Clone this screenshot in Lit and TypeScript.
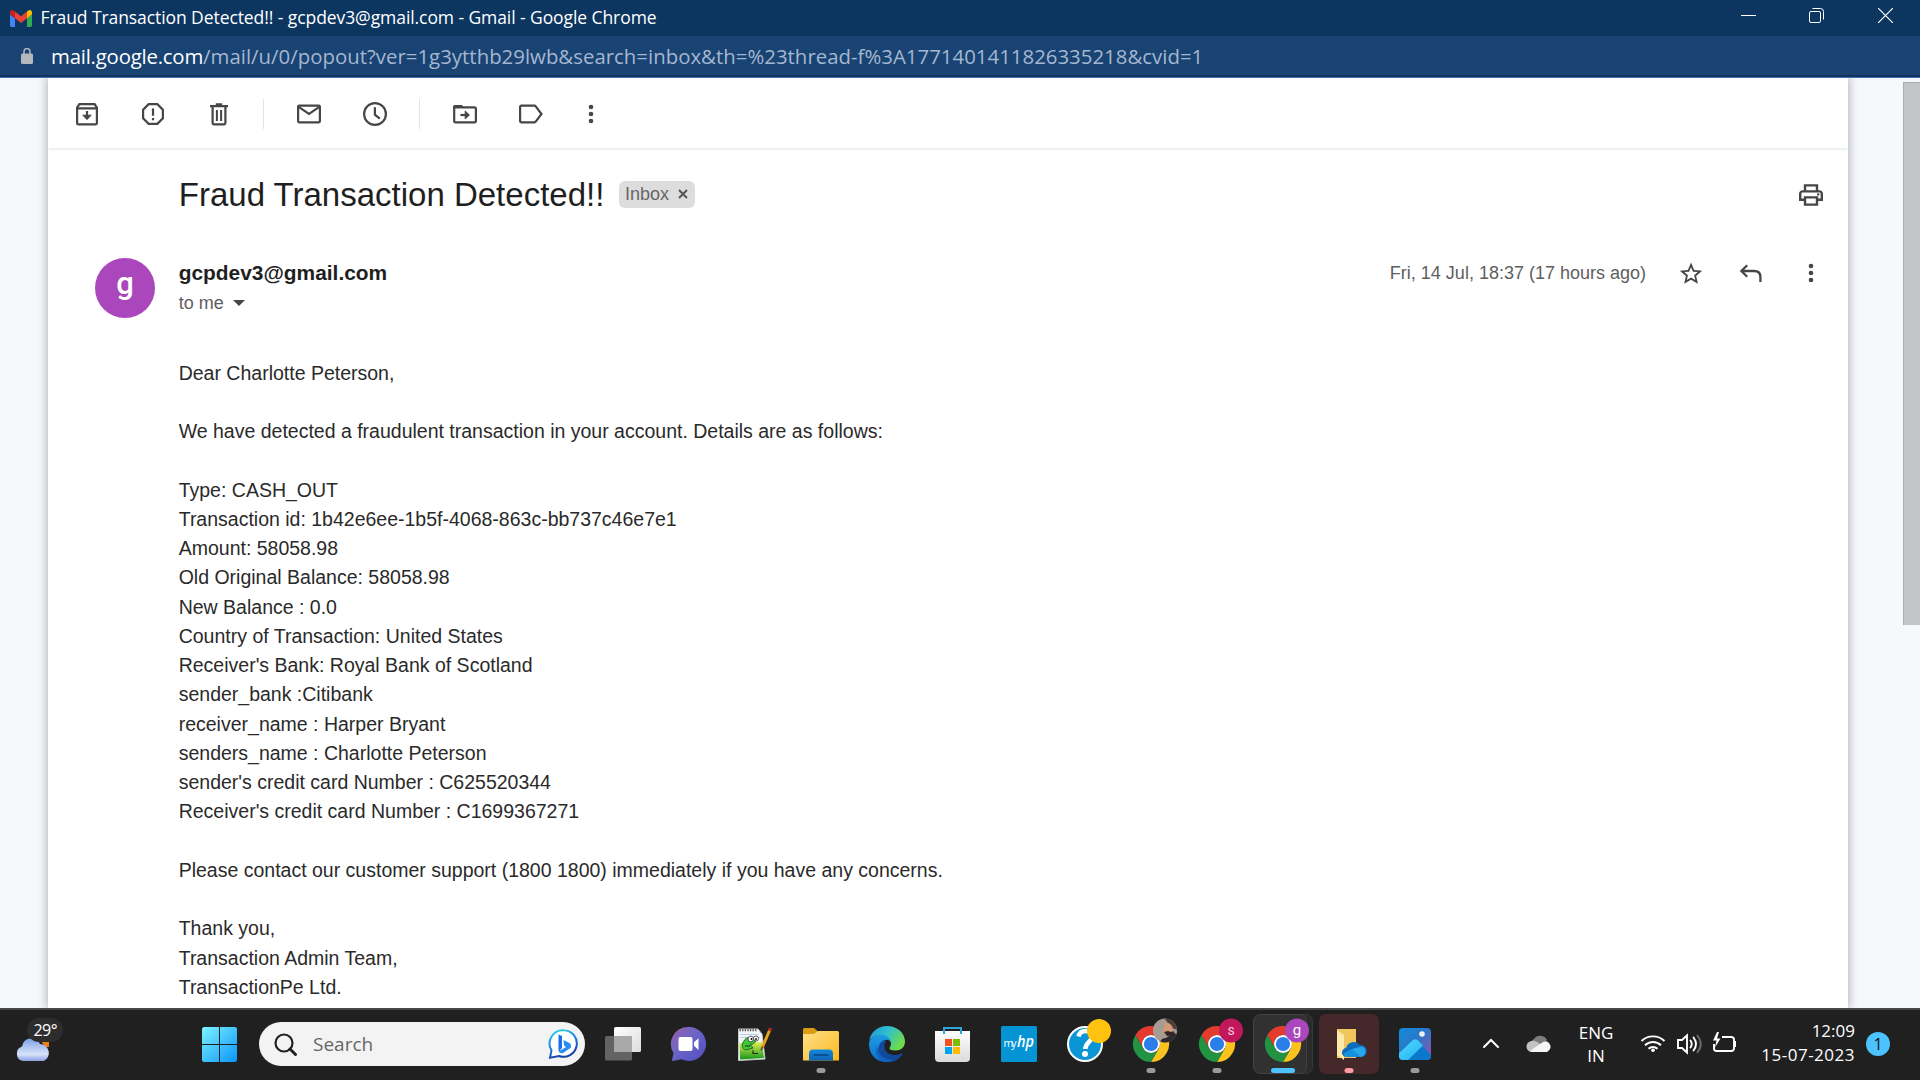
import { LitElement, html, css, svg } from "lit";
import { customElement } from "lit/decorators.js";

const bodyLines = [
  "Dear Charlotte Peterson,",
  "",
  "We have detected a fraudulent transaction in your account. Details are as follows:",
  "",
  "Type: CASH_OUT",
  "Transaction id: 1b42e6ee-1b5f-4068-863c-bb737c46e7e1",
  "Amount: 58058.98",
  "Old Original Balance: 58058.98",
  "New Balance : 0.0",
  "Country of Transaction: United States",
  "Receiver's Bank: Royal Bank of Scotland",
  "sender_bank :Citibank",
  "receiver_name : Harper Bryant",
  "senders_name : Charlotte Peterson",
  "sender's credit card Number : C625520344",
  "Receiver's credit card Number : C1699367271",
  "",
  "Please contact our customer support (1800 1800) immediately if you have any concerns.",
  "",
  "Thank you,",
  "Transaction Admin Team,",
  "TransactionPe Ltd.",
];

const icon30 = (content: unknown) => html`<svg class="icon" width="30" height="30" viewBox="0 0 30 30" fill="none" stroke="#444746" stroke-width="2.2">${content}</svg>`;

const dots = svg`<g fill="#444746" stroke="none"><circle cx="15" cy="8" r="2.3"/><circle cx="15" cy="15" r="2.3"/><circle cx="15" cy="22" r="2.3"/></g>`;

const archive = svg`<path d="M5.1 8.6V24a1.4 1.4 0 0 0 1.4 1.4h17a1.4 1.4 0 0 0 1.4-1.4V8.6L22.6 5.1H7.4Z"/><path d="M5.1 9.4h19.8M15 12v8"/><path d="M10.800 16.200L15 20.600l4.200-4.400Z" fill="#444746" stroke-width="1"/>`;
const spam = svg`<path d="M10.600 5.100h8.800l5.500 5.500v8.800l-5.500 5.500h-8.800l-5.500-5.500v-8.800Z"/><path d="M15 9.400v7.400M15 18.900v2.400"/>`;
const trash = svg`<path d="M6 7.100h18M11.800 5.400h6.400M8.600 7.500v16.600a1.300 1.300 0 0 0 1.300 1.300h10.200a1.300 1.300 0 0 0 1.300-1.300V7.500"/><path d="M12.900 11v11M17.100 11v11" stroke-width="2"/>`;
const mail = svg`<rect x="4.100" y="6.700" width="21.800" height="16.600" rx="1"/><path d="M4.300 7.600l10.700 7.200L25.700 7.600"/>`;
const clock = svg`<circle cx="15" cy="15" r="10.900"/><path d="M14.900 8.300v7.400l4.900 4"/>`;
const moveTo = svg`<path d="M3.100 7.400a1.500 1.500 0 0 1 1.500-1.500h7.200l2.600 2.800H3.100Z" fill="#444746" stroke="none"/><path d="M4.200 8.400h20.400a1.300 1.300 0 0 1 1.300 1.300v12.400a1.300 1.300 0 0 1-1.300 1.300H5.400a1.200 1.200 0 0 1-1.200-1.300V7"/><path d="M10.400 16h8"/><path d="M15.200 12l4.200 4-4.200 4Z" fill="#444746" stroke-width="1"/>`;
const label = svg`<path d="M4.100 7.900a1.200 1.200 0 0 1 1.200-1.200h13.200a1.500 1.500 0 0 1 1.200.6l5.800 7.700-5.800 7.700a1.500 1.500 0 0 1-1.200.6H5.300a1.200 1.200 0 0 1-1.200-1.200Z"/>`;
const printer = svg`<g transform="translate(.6 .6) scale(1.2)" fill="#444746" stroke="none"><path d="M19 8h-1V3H6v5H5c-1.660 0-3 1.340-3 3v6h4v4h12v-4h4v-6c0-1.660-1.340-3-3-3zM8 5h8v3H8V5zm8 12v2H8v-4h8v2zm2-2v-2H6v2H4v-4c0-.55.45-1 1-1h14c.55 0 1 .45 1 1v4h-2z"/><circle cx="18" cy="11.500" r="1"/></g>`;
const star = svg`<path transform="translate(1.600 2.300) scale(1.120)" fill="#444746" stroke="none" d="M22 9.240l-7.190-.62L12 2 9.190 8.630 2 9.240l5.460 4.730L5.820 21 12 17.270 18.180 21l-1.630-7.030L22 9.240zM12 15.400l-3.760 2.270 1-4.280-3.320-2.880 4.380-.38L12 6.100l1.710 4.040 4.380.38-3.320 2.880 1 4.280L12 15.400z"/>`;
const reply = svg`<path d="M11.200 7.200L5.400 13l5.800 5.800M5.600 13h12.600c4.200 0 6.200 2.400 6.200 6v5" stroke-width="2.300"/>`;

const chromeLogo = svg`<g transform="translate(33 36)">
  <path fill="#e33b2e" d="M-15.590-9A18 18 0 0 1 15.590-9L0-9A9 9 0 0 0-7.790 4.500Z"/>
  <path fill="#fcc31e" transform="rotate(120)" d="M-15.590-9A18 18 0 0 1 15.590-9L0-9A9 9 0 0 0-7.790 4.500Z"/>
  <path fill="#229342" transform="rotate(240)" d="M-15.590-9A18 18 0 0 1 15.590-9L0-9A9 9 0 0 0-7.790 4.500Z"/>
  <circle r="9" fill="#fff"/><circle r="7.100" fill="#2b7de9"/></g>`;
const runDot = svg`<rect x="28.500" y="60" width="9" height="5" rx="2.500" fill="#9a9a9a"/>`;

const taskView = svg`<defs><linearGradient id="tv" x1="0" y1="0" x2="1" y2="1"><stop stop-color="#fff"/><stop offset="1" stop-color="#dcdcdc"/></linearGradient></defs>
  <rect x="24" y="19" width="27" height="25" rx="1.500" fill="url(#tv)"/><rect x="15" y="28" width="27" height="24.500" rx="1.500" fill="#636363"/><path d="M24 28h18v16H24Z" fill="#a9a9a9"/>`;
const chat = svg`<defs><linearGradient id="ch" x1="0" y1="0" x2="1" y2="1"><stop stop-color="#9a5fa8"/><stop offset=".4" stop-color="#6f66c4"/><stop offset="1" stop-color="#4f4fc4"/></linearGradient></defs>
  <path d="M32.500 19a17 17 0 1 1-7 32.200L16.500 53l-.500-1 1.500-7A17 17 0 0 1 32.500 19Z" fill="url(#ch)"/>
  <rect x="22.500" y="29" width="14" height="14" rx="2" fill="#fff"/><path d="M38 34.300l4.500-4.100v11.800L38 37.800Z" fill="#fff"/>`;
const notepad = svg`<defs><linearGradient id="np" x1="0" y1="0" x2="0" y2="1"><stop stop-color="#e7ee54"/><stop offset="1" stop-color="#12971a"/></linearGradient></defs>
  <path d="M16.500 21h19.500l4 5 3 25-26.500 1.500Z" fill="#f3f6f8" stroke="#c5c8c8"/>
  <path d="M17.500 22.200h18" stroke="#444" stroke-width="2" stroke-dasharray="1.300 1.300"/><path d="M18 26.500h18M18 29.500h20" stroke="#b9cfe6"/>
  <path d="M17.500 35l22.500-1 2 16-24 1.500Z" fill="url(#np)"/>
  <path d="M22 33c2-4 6-4 7-1l4-1c2 3-2 6-5 5l3 4-7 2c-4-1-5-5-2-9Z" fill="#3ec93a" stroke="#236b1b"/>
  <circle cx="28.800" cy="31" r="2.800" fill="#fff" stroke="#333" stroke-width=".8"/><circle cx="34" cy="30.500" r="2.500" fill="#fff" stroke="#333" stroke-width=".8"/><circle cx="29.500" cy="31" r="1"/><circle cx="34" cy="31" r=".9"/>
  <path d="M31 42.500v3h5M23 38h5" stroke="#1e2b12" stroke-width="1.200" fill="none"/>
  <path d="M48 21.500L40 40" stroke="#e9a41b" stroke-width="3"/><path d="M48.700 20l-1.200 3" stroke="#b32b25" stroke-width="3"/><path d="M40.700 38.500L39 42.500" stroke="#5a4224" stroke-width="1.500"/>`;
const explorer = svg`<defs><linearGradient id="ex" x1="0" y1="0" x2="1" y2="1"><stop stop-color="#ffe08a"/><stop offset="1" stop-color="#f9b91e"/></linearGradient><linearGradient id="eb" x1="0" y1="0" x2="0" y2="1"><stop stop-color="#1489dd"/><stop offset="1" stop-color="#0e64b4"/></linearGradient></defs>
  <path d="M15 21.500a1.500 1.500 0 0 1 1.500-1.500h9.500l4 3.500-3.500 3H15Z" fill="#dd9d10"/>
  <path d="M15 26h11l4-3h19.500a1.500 1.500 0 0 1 1.500 1.500v28H15Z" fill="url(#ex)"/>
  <path d="M21 52.500v-7a4 4 0 0 1 4-4h16a4 4 0 0 1 4 4v7Z" fill="url(#eb)"/><path d="M25.500 47h15" stroke="#0a4c8c" stroke-width="1.800"/>${runDot}`;
const edge = svg`<defs><linearGradient id="e1" x1="0" y1="0" x2="1" y2=".5"><stop stop-color="#2492d8"/><stop offset=".5" stop-color="#2fc0cf"/><stop offset="1" stop-color="#6edb4b"/></linearGradient><linearGradient id="e2" x1="0" y1="0" x2="0" y2="1"><stop stop-color="#1f9de2"/><stop offset="1" stop-color="#0c6fd0"/></linearGradient></defs>
  <path d="M15.300 32C17 24 24 18 33 18c10 0 18 7 18 15.500 0 6-4.500 9-9.500 9-4 0-6-1-6-2.300 0-1 1.500-1.800 1.500-4.600 0-4-5-8.500-11-8.500-4.500 0-8.500 2-10.700 4.900Z" fill="url(#e1)"/>
  <path d="M15 36c0-5.500 5-9.500 11.500-9.500 5.500 0 9.500 3 10.300 7.500-1.500-1.800-3.500-2.500-5.300-2-7 2-9 11-1 18.500l5.500 3C23 56 15 47 15 36Z" fill="url(#e2)"/>
  <path d="M28 33.500c-4.500 4-5.500 11 .5 16.500 6.500 6 14.500 4.500 19.700-3.500.5-.8-.2-1.500-1.200-1-8.500 4-17.500-.5-16.500-8 .2-2 .8-3.500 1.700-4.700-1.600-.5-3-.4-4.200.7Z" fill="#114a9d"/>
  <path d="M32 53.900c-8-1.500-12-9-9-16 1 9 8 14 16 14-2 1.500-4.500 2.200-7 2Z" fill="#1263bf"/>`;
const store = svg`<defs><linearGradient id="st" x1="0" y1="0" x2="0" y2="1"><stop stop-color="#fff"/><stop offset="1" stop-color="#dadada"/></linearGradient></defs>
  <path d="M15 23h35v27a4 4 0 0 1-4 4H19a4 4 0 0 1-4-4Z" fill="url(#st)"/><path d="M24 26v-6h17v6" fill="none" stroke="#2ba7dd" stroke-width="2"/>
  <path d="M25 31h7v7h-7Z" fill="#f25022"/><path d="M33 31h7v7h-7Z" fill="#7fba00"/><path d="M25 39h7v7h-7Z" fill="#00a4ef"/><path d="M33 39h7v7h-7Z" fill="#ffb900"/>`;
const myhp = svg`<rect x="15" y="18" width="36" height="36" rx="1.500" fill="#0494d4"/><text x="17.500" y="39" fill="#fff" font-family="Open Sans, sans-serif"><tspan font-size="10.500" textLength="13">my</tspan><tspan x="31" font-size="16.500" font-weight="600" font-style="italic" textLength="17" lengthAdjust="spacingAndGlyphs">hp</tspan></text>`;
const help = svg`<circle cx="33" cy="36" r="17" fill="#0a95d5" stroke="#fff" stroke-width="2"/><path d="M26.500 28.500c1-4.500 4-5.500 7-5.500 4 0 6.500 2.500 6.500 5.500 0 5.500-6.500 5.500-6.700 12.500" fill="none" stroke="#fff" stroke-width="4.500"/><circle cx="33" cy="46" r="3" fill="#fff"/><circle cx="47" cy="23" r="12" fill="#ffc20e"/>`;
const chromePhoto = svg`<defs><clipPath id="av"><circle cx="47" cy="22.500" r="12"/></clipPath></defs>${chromeLogo}<g clip-path="url(#av)"><rect x="34" y="9" width="26" height="28" fill="#a69c94"/><path d="M46 10l14 2v10l-6-2-4-5Z" fill="#4b3f3c"/><path d="M47 15c5-1 8 3 8 8l-4 6-6-5Z" fill="#d49a78"/><path d="M42 37c0-6 3-7 6-7l8-6 4 5v9Z" fill="#2c2a2c"/><path d="M46 24l3 4 5-1 2-4-3 1-3-1Z" fill="#332522"/></g>${runDot}`;
const chromeS = svg`${chromeLogo}<circle cx="47" cy="22.500" r="12" fill="#c2185b"/><text x="47" y="27" text-anchor="middle" font-size="14" fill="#f6c6d9" font-family="Roboto, sans-serif">s</text>${runDot}`;
const chromeG = svg`<path d="M50 6.500h5q7.500 0 7.500 7.500v44q0 7.500-7.500 7.500h-5Z" fill="#2b2b2b" stroke="#383838"/><rect x="3.500" y="6.500" width="53" height="59" rx="7" fill="#313131" stroke="#434343"/>${chromeLogo}<circle cx="47" cy="22.500" r="12" fill="#ab47bc"/><text x="47" y="26.500" text-anchor="middle" font-size="15" fill="#fff" font-family="Roboto, sans-serif">g</text><rect x="21" y="60" width="24" height="5" rx="2.500" fill="#4cc2ff"/>`;
const oneDriveFolder = svg`<rect x="3" y="6" width="60" height="60" rx="7" fill="#452829"/><path d="M21 21h19v29H21Z" fill="#f0c75e"/><path d="M21 22l7 5v25l-7-5Z" fill="#fde9a9"/>
  <path d="M31 49a4.500 4.500 0 0 1-1-9 8 8 0 0 1 14-3 6 6 0 0 1 1.500 12Z" fill="#0f6cbd"/><path d="M28 45.500L36 41l10-2.500a5.500 5.500 0 0 1-1 10.500H31.500Q28 48 28 45.500Z" fill="#28a8ea"/><path d="M36 41l9 8H31.500Q29 48 28.500 45.500Z" fill="#1590df"/><rect x="28.500" y="60" width="9" height="5" rx="2.500" fill="#ff99a4"/>`;
const photos = svg`<defs><linearGradient id="ph" x1="0" y1="0" x2="1" y2="1"><stop stop-color="#128bdc"/><stop offset=".45" stop-color="#2b78c8"/><stop offset="1" stop-color="#9a4fb4"/></linearGradient><linearGradient id="pm" x1="0" y1="0" x2="1" y2="1"><stop stop-color="#55dcff"/><stop offset="1" stop-color="#1fb0f0"/></linearGradient><clipPath id="pc"><rect x="17" y="20" width="32" height="32" rx="4"/></clipPath></defs>
  <g clip-path="url(#pc)"><rect x="17" y="20" width="32" height="32" fill="url(#ph)"/><path d="M24 53l13.500-14a3 3 0 0 1 4 0L50 48v5Z" fill="#0b78cc"/><path d="M15 47l15.500-14.500a4 4 0 0 1 5.500 0l5 5L25 53H15Z" fill="url(#pm)"/></g><circle cx="40" cy="26" r="2.800" fill="#eee"/>${runDot}`;

const apps = [taskView, chat, notepad, explorer, edge, store, myhp, help, chromePhoto, chromeS, chromeG, oneDriveFolder, photos];

@customElement("app-root")
export class AppRoot extends LitElement {
  static styles = css`
    :host { display: block; width: 1920px; height: 1080px; overflow: hidden; font-family: "Liberation Sans", Arial, sans-serif; }
    * { box-sizing: border-box; }
    svg { display: block; flex: none; }
    .screen { display: flex; flex-direction: column; width: 1920px; height: 1080px; }
    .segoe { font-family: "Open Sans", "Noto Sans", sans-serif; }
    .titlebar { height: 36px; background: #0c3560; display: flex; align-items: center; padding-left: 10px; color: #fff; flex: none; }
    .title { font-size: 17.500px; letter-spacing: -0.08px; margin-left: 8.500px; flex: 1; white-space: nowrap; line-height: 24px; padding-bottom: 2px; }
    .controls { display: flex; align-items: center; padding: 0 27px 5px 0; gap: 54px; }
    .minimize { margin-right: -1px; }
    .address { height: 42px; background: #184373; border-bottom: 1px solid #3c72b0; box-shadow: inset 0 -2px #12335b; display: flex; align-items: center; padding: 0 0 2px 21px; font-size: 20.350px; color: #a5b7d0; white-space: nowrap; flex: none; }
    .url { margin-left: 18px; line-height: 30px; }
    .host { color: #fff; letter-spacing: -0.200px; }
    .path { letter-spacing: 0.030px; }
    .page { height: 930px; background: #f6f8fc; display: flex; overflow: hidden; flex: none; }
    .card { margin-left: 48px; width: 1800px; background: #fff; box-shadow: 0 0 9px 1px rgba(60, 64, 67, 0.38); flex: none; display: flex; flex-direction: column; }
    .scroll { margin-left: 55px; margin-top: 4px; width: 17px; height: 543px; background: #c4c5c9; border-left: 1px solid #adadb0; border-top: 1px solid #adadb0; }
    .toolbar { height: 72px; border-bottom: 2px solid #eff0f0; display: flex; align-items: center; padding: 2px 0 0 23px; gap: 36px; margin: 0 1px; flex: none; }
    .sep { width: 1px; height: 30px; background: #e3e5e8; margin: 0 -6px 0 -7px; }
    .overflow { margin-left: -6px; }
    .subject-row { display: flex; align-items: center; height: 89px; padding: 0 22px 0 130.800px; }
    .subject { font-size: 33px; color: #1f1f1f; font-weight: 400; margin: 0; white-space: nowrap; line-height: 44px; }
    .badge { margin-left: 14.600px; width: 76px; height: 27px; border-radius: 6px; background: #ddd; color: #666; font-size: 18px; display: flex; align-items: center; padding-left: 6px; gap: 9px; white-space: nowrap; }
    .badge svg { margin-top: -2px; }
    .grow { flex: 1; }
    .head { display: flex; align-items: flex-start; height: 119.600px; padding: 19px 22px 0 47px; }
    .avatar { width: 60px; height: 60px; border-radius: 50%; background: #ab47bc; color: #fff; font: 500 31px/51px Roboto, sans-serif; text-align: center; }
    .who { margin-left: 23.700px; }
    .sender { font-size: 20.900px; font-weight: 700; color: #1f1f1f; line-height: 30px; white-space: nowrap; }
    .to { font-size: 18px; color: #5e5e5e; line-height: 28px; display: flex; align-items: center; gap: 9px; padding-top: 1px; }
    .date { font-size: 18px; color: #5e5e5e; line-height: 30px; white-space: nowrap; margin-right: 30px; }
    .actions { display: flex; gap: 30px; }
    .body { padding-left: 130.700px; font-size: 19.500px; line-height: 29.250px; color: #2a2a2a; white-space: pre; }
    .line { height: 29.250px; }
    .taskbar { height: 72px; background: #202020; border-top: 2px solid #484848; display: flex; color: #fff; flex: none; }
    .taskbar > * { flex: none; }
    .search { width: 326px; height: 44px; border-radius: 22px; background: #f3f3f3; margin-top: 12px; margin-right: 5px; display: flex; align-items: center; padding: 0 6px 0 15px; color: #666; font-size: 19px; }
    .search-text { flex: 1; margin-left: 16px; line-height: 28px; }
    .app { width: 66px; height: 70px; overflow: visible; }
    .tray { display: flex; flex: 1; }
    .tray > * { flex: none; }
    .lang { width: 36px; margin-left: 26px; padding-top: 11px; text-align: center; font-size: 17px; line-height: 23px; }
    .when { width: 110px; padding-top: 9px; text-align: right; font-size: 17px; line-height: 24px; margin-left: 9px; white-space: nowrap; }
    .day { letter-spacing: 0.500px; }
    .note { width: 24px; height: 24px; border-radius: 50%; background: #4cc2ff; color: #111; margin: 22px 0 0 11px; text-align: center; font-size: 16px; line-height: 24px; }
  `;

  render() {
    return html`<div class="screen">
      <header class="titlebar segoe">
        <svg width="22" height="17" viewBox="52 42 88 66" preserveAspectRatio="none"><path fill="#4285f4" d="M58 108h14V74L52 59v43c0 3.320 2.690 6 6 6"/><path fill="#34a853" d="M120 108h14c3.320 0 6-2.690 6-6V59l-20 15"/><path fill="#fbbc04" d="M120 48v26l20-15v-8c0-7.420-8.470-11.650-14.400-7.200"/><path fill="#ea4335" d="M72 74V48l24 18 24-18v26L96 92"/><path fill="#c5221f" d="M52 51v8l20 15V48l-5.600-4.200c-5.940-4.450-14.400-.22-14.400 7.200"/></svg>
        <div class="title">Fraud Transaction Detected!! - gcpdev3@gmail.com - Gmail - Google Chrome</div>
        <div class="controls">
          <svg class="minimize" width="15" height="15" viewBox="0 0 15 15"><path d="M0 7.500h15" stroke="#fff"/></svg>
          <svg width="15" height="15" viewBox="0 0 15 15" fill="none" stroke="#fff"><rect x=".5" y="3.500" width="11" height="11" rx="1.500"/><path d="M3.500 .5h8a3 3 0 0 1 3 3v8"/></svg>
          <svg width="15" height="15" viewBox="0 0 15 15"><path d="M0 0l15 15M15 0L0 15" stroke="#fff" stroke-width="1.200"/></svg>
        </div>
      </header>
      <div class="address segoe">
        <svg width="12" height="16" viewBox="0 0 12 16"><rect y="5.500" width="12" height="10.500" rx="1.500" fill="#b4b8bd"/><path d="M3 6V3.500a3 3 0 0 1 6 0V6" fill="none" stroke="#b4b8bd" stroke-width="1.500"/></svg>
        <div class="url"><span class="host">mail.google.com</span><span class="path">/mail/u/0/popout?ver=1g3ytthb29lwb&amp;search=inbox&amp;th=%23thread-f%3A1771401411826335218&amp;cvid=1</span></div>
      </div>
      <main class="page">
        <section class="card">
          <div class="toolbar">${icon30(archive)}${icon30(spam)}${icon30(trash)}<i class="sep"></i>${icon30(mail)}${icon30(clock)}<i class="sep"></i>${icon30(moveTo)}${icon30(label)}<div class="overflow">${icon30(dots)}</div></div>
          <div class="subject-row"><h2 class="subject">Fraud Transaction Detected!!</h2>
            <div class="badge"><span>Inbox</span><svg width="10" height="10" viewBox="0 0 10 10"><path d="M1 1l8 8M9 1L1 9" stroke="#555" stroke-width="2"/></svg></div>
            <div class="grow"></div>${icon30(printer)}</div>
          <div class="head">
            <div class="avatar">g</div>
            <div class="who"><div class="sender">gcpdev3@gmail.com</div><div class="to"><span>to me</span><svg width="12" height="6" viewBox="0 0 12 6"><path d="M0 0h12L6 6Z" fill="#444746"/></svg></div></div>
            <div class="grow"></div>
            <div class="date">Fri, 14 Jul, 18:37 (17 hours ago)</div>
            <div class="actions">${icon30(star)}${icon30(reply)}${icon30(dots)}</div>
          </div>
          <div class="body">${bodyLines.map((l) => html`<div class="line">${l}</div>`)}</div>
        </section>
        <div class="scroll"></div>
      </main>
      <footer class="taskbar segoe">
        <svg width="202" height="70" viewBox="0 2 202 70">
          <defs><linearGradient id="cl" x1="0" y1="0" x2="0" y2="1"><stop stop-color="#7ea0e8"/><stop offset=".7" stop-color="#d7e2fa"/><stop offset="1" stop-color="#8b9fe0"/></linearGradient></defs>
          <path d="M41 33h8v6h-4Z" fill="#ee7b1c"/><path d="M22 53a7.500 7.500 0 0 1-1-14.500 9.500 9.500 0 0 1 18-2.500 9 9 0 0 1 4 17Z" transform="translate(1 0)" fill="url(#cl)"/>
          <rect x="27" y="10" width="36" height="24" rx="12" fill="#2d2d2d"/><text x="33.500" y="28" font-size="16" fill="#fff" textLength="24">29°</text></svg>
        <svg width="57" height="70" viewBox="202 2 57 70"><defs><linearGradient id="wn" gradientUnits="userSpaceOnUse" x1="202" y1="19" x2="237" y2="54"><stop stop-color="#7df3ff"/><stop offset="1" stop-color="#0a94fb"/></linearGradient></defs><path fill="url(#wn)" d="M203.500 19H219v17h-17V20.500ZM220 19h15.500l1.500 1.500V36h-17ZM202 37h17v17h-15.500l-1.500-1.500ZM220 37h17v15.500l-1.500 1.500H220Z"/></svg>
        <div class="search"><svg width="23" height="23" viewBox="0 0 23 23" fill="none" stroke="#222"><circle cx="10" cy="10" r="8.500" stroke-width="2.200"/><path d="M16 16l5.500 5.500" stroke-width="3" stroke-linecap="round"/></svg><span class="search-text">Search</span>
          <svg width="31" height="32" viewBox="0 0 31 32"><defs><linearGradient id="bg" x1="0" y1="0" x2=".4" y2="1"><stop stop-color="#2be0e4"/><stop offset=".5" stop-color="#2284e8"/><stop offset="1" stop-color="#1740a8"/></linearGradient></defs><path d="M16 2.200A13.300 13.300 0 1 1 11 28l-9 1.800 1.500-7.500A13.300 13.300 0 0 1 16 2.200Z" fill="#fff" stroke="url(#bg)" stroke-width="2"/><path d="M10.500 6.500l3.500 1.500v12l-3 3.500-.5-1Z" fill="#1b6fe6"/><path d="M15.500 12l6 3q2.500 2 1 5l-7.500 5q-3 1-4.300-1.500l7.300-4.500-2-1.500Z" fill="#2a8cf0"/></svg></div>
        ${apps.map((a) => html`<svg class="app" width="66" height="70" viewBox="0 2 66 70">${a}</svg>`)}
        <div class="tray">
          <svg width="104" height="70" viewBox="1448 10 104 70"><path d="M1484 47l7-7 7 7" fill="none" stroke="#fff" stroke-width="2" stroke-linecap="round"/><path d="M1531 43a4.500 4.500 0 0 1 3-4 7.500 7.500 0 0 1 13 1l-8 7Z" fill="#7d7d7d"/><path d="M1532 52a5 5 0 0 1 0-11q3-.8 6 1.500l8 6.500-4 3Z" fill="#c3c3c3"/><path d="M1530 51l10-7q6-5 9-1 4 5-2 9h-15Z" fill="#f5f5f5"/></svg>
          <div class="lang"><div>ENG</div><div>IN</div></div>
          <svg width="122" height="70" viewBox="1614 10 122 70" fill="none" stroke="#fff" stroke-width="1.900">
            <path d="M1641.500 41a16.500 16.500 0 0 1 23 0M1645 45.200a11.500 11.500 0 0 1 16 0M1648.500 48.800a6.500 6.500 0 0 1 9 0"/><circle cx="1653" cy="50.200" r="1.800" fill="#fff" stroke="none"/>
            <path d="M1678 40h4l5-4.500v17l-5-4.500h-4Z"/><path d="M1690.500 40.500q2.500 3.500 0 7M1693.500 37.500q5 6.500 0 13" stroke-linecap="round"/><path d="M1697 35q7.500 9 0 18" stroke="#686868"/>
            <path d="M1722 37h9.500a2.500 2.500 0 0 1 2.500 2.500v9a2.500 2.500 0 0 1-2.500 2.500h-15a2.500 2.500 0 0 1-2.500-2.500V44"/><path d="M1735 42h1.500v4h-1.500Z" fill="#fff"/><path d="M1717 32l-4 8.500h3.500l-1.500 7 5.500-9h-3.500l2-6.500Z" fill="#fff" stroke="none"/>
          </svg>
          <div class="when"><div>12:09</div><div class="day">15-07-2023</div></div>
          <div class="note">1</div>
        </div>
      </footer>
    </div>`;
  }
}
